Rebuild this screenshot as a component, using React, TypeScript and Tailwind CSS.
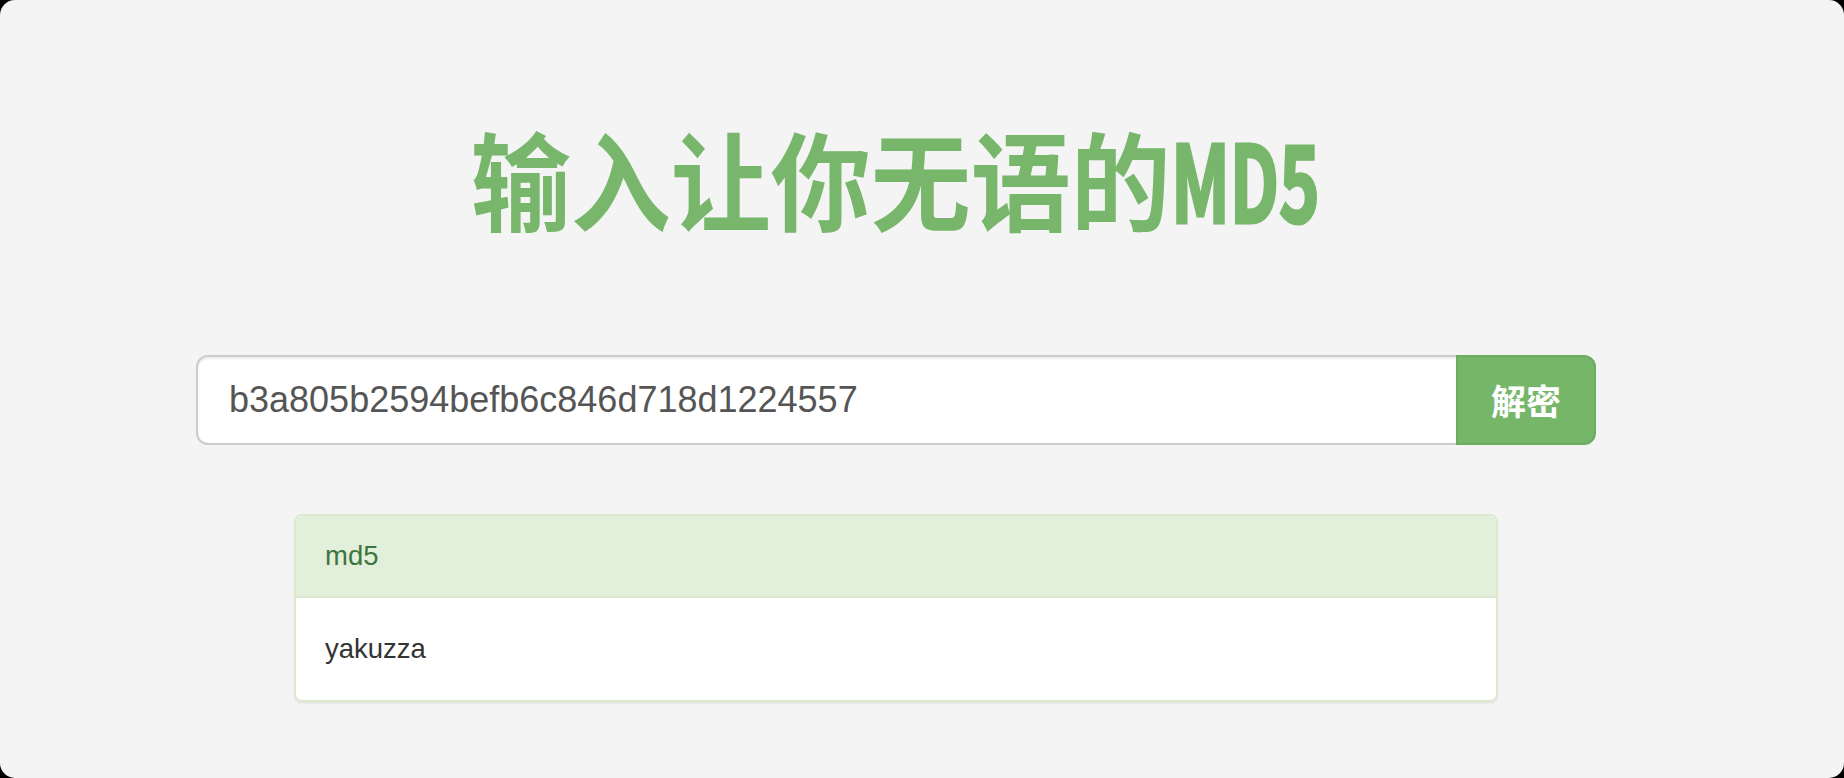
export default function App() {
  const hash = "b3a805b2594befb6c846d718d1224557"

  return (
    <div className="w-[1844px] h-[778px] bg-black">
      <div className="h-full rounded-[15px] bg-[#f4f4f4] pl-[196px] pt-[110px] font-['Liberation_Sans','Noto_Sans_CJK_SC',sans-serif]">
        <div className="w-[1400px]">
          <h1 className="text-center text-[100px] leading-[140px] font-bold text-[#77b66b] font-['Noto_Sans_CJK_SC',sans-serif] scale-y-[1.07] origin-[50%_80%]">
            输入让你无语的
            <span className="inline-block scale-x-[0.69] origin-left -mr-[65px] [-webkit-text-stroke:3px_#77b66b]">MD5</span>
          </h1>

          <div className="mt-[105px] flex h-[90px]">
            <input
              type="text"
              value={hash}
              readOnly
              className="flex-1 h-full px-[31px] bg-white border-2 border-[#ccc] border-r-0 rounded-l-[12px] text-[36px] text-[#555] outline-none shadow-[inset_0_2px_2px_rgba(0,0,0,0.075)]"
            />
            <button
              type="button"
              className="w-[140px] h-full bg-[#76b669] border-2 border-[#6aad5d] rounded-r-[12px] text-[35px] font-bold text-white font-['Noto_Sans_CJK_SC',sans-serif]"
            >
              解密
            </button>
          </div>

          <div className="mt-[69px] ml-[98px] w-[1204px] bg-white border-2 border-[#dbe9cf] rounded-[8px] shadow-[0_2px_2px_rgba(0,0,0,0.05)] overflow-hidden">
            <div className="h-[82px] px-[29px] flex items-center bg-[#e2efdb] border-b-2 border-[#d9e8ce] text-[27.5px] text-[#3c763d]">
              md5
            </div>
            <div className="h-[102px] px-[29px] flex items-center text-[27.5px] text-[#333]">
              yakuzza
            </div>
          </div>
        </div>
      </div>
    </div>
  )
}
